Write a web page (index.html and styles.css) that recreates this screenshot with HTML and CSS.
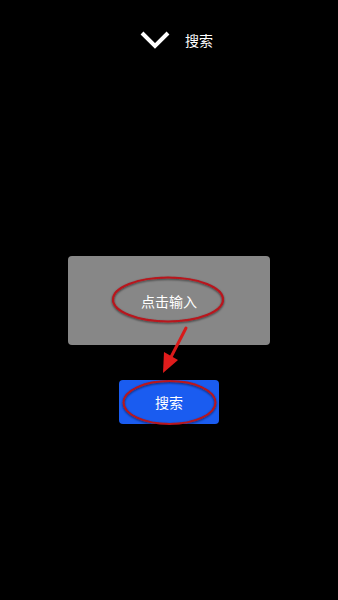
FILE: index.html
```html
<!DOCTYPE html>
<html lang="zh">
<head>
    <meta charset="UTF-8">
    <meta name="viewport" content="width=device-width, initial-scale=1.0">
    <title>搜索</title>
    <link rel="stylesheet" href="styles.css">
</head>
<body>
    <div class="header">
        <svg class="back-icon" width="30" height="18" viewBox="0 0 30 18">
            <path d="M2 2 L15 15 L28 2" fill="none" stroke="#fff" stroke-width="4"/>
        </svg>
        <span class="header-title">搜索</span>
    </div>

    <div class="content">
        <div class="input-box">点击输入</div>
        <button class="search-btn">搜索</button>
    </div>

    <!-- annotation marks drawn over the screenshot -->
    <svg class="marks" width="338" height="600" viewBox="0 0 338 600">
        <defs>
            <filter id="shadow" x="-20%" y="-20%" width="140%" height="140%">
                <feDropShadow dx="0" dy="1" stdDeviation="1.2" flood-color="#000" flood-opacity="0.6"/>
            </filter>
        </defs>
        <ellipse cx="168" cy="299.5" rx="55" ry="22" fill="none" stroke="#b8141c" stroke-width="2.2" filter="url(#shadow)"/>
        <ellipse cx="169.5" cy="402.5" rx="46" ry="21.5" fill="none" stroke="#b8141c" stroke-width="2" filter="url(#shadow)"/>
        <line x1="186" y1="328" x2="170" y2="359" stroke="#d81a1a" stroke-width="3" stroke-linecap="round"/>
        <polygon points="163,373 164,352 178,360" fill="#e01c1c"/>
    </svg>
</body>
</html>
```

FILE: styles.css
```css
* {
    margin: 0;
    padding: 0;
    box-sizing: border-box;
    font-family: 'Noto Sans CJK SC', 'Noto Sans', sans-serif;
}

body {
    width: 338px;
    height: 600px;
    background-color: #000;
    position: relative;
    overflow: hidden;
}

.header {
    display: flex;
    align-items: center;
    justify-content: center;
    gap: 15px;
    padding-top: 30px;
    height: 50px;
    padding-left: 15px;
}

.back-icon {
    display: block;
}

.header-title {
    color: #fff;
    font-size: 14px;
    line-height: 20px;
}

.content {
    display: flex;
    flex-direction: column;
    align-items: center;
    padding-top: 206px;
}

.input-box {
    width: 202px;
    height: 89px;
    background-color: #878787;
    border-radius: 4px;
    color: #fff;
    font-size: 14px;
    display: flex;
    align-items: center;
    justify-content: center;
}

.search-btn {
    width: 100px;
    height: 44px;
    margin-top: 35px;
    background-color: #1a5cf0;
    border: none;
    border-radius: 4px;
    color: #fff;
    font-size: 14px;
}

.marks {
    position: absolute;
    top: 0;
    left: 0;
    pointer-events: none;
}
```
